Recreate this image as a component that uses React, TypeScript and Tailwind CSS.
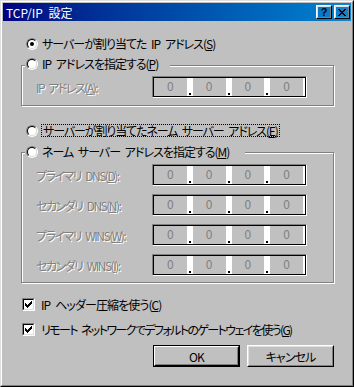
import { Fragment } from 'react';

const disabledText = 'text-[#808080] [text-shadow:1px_1px_0_#fff]';

function Radio({ checked }: { checked?: boolean }) {
  return (
    <span className="flex h-[12px] w-[12px] shrink-0 rounded-full border border-t-[#808080] border-l-[#808080] border-b-white border-r-white">
      <span className="flex flex-1 items-center justify-center rounded-full border border-t-black border-l-black border-b-[#dfdfdf] border-r-[#dfdfdf] bg-white">
        {checked && <span className="h-[4px] w-[4px] rounded-full bg-black" />}
      </span>
    </span>
  );
}

function Checkbox() {
  return (
    <span className="flex h-[13px] w-[13px] shrink-0 border border-t-[#808080] border-l-[#808080] border-b-white border-r-white">
      <span className="flex flex-1 items-center justify-center border border-t-black border-l-black border-b-[#dfdfdf] border-r-[#dfdfdf] bg-white">
        <svg width="7" height="7" viewBox="0 0 7 7" shapeRendering="crispEdges">
          <path
            d="M6 0h1v1h-1zM5 1h2v1h-2zM0 2h1v1h-1zM4 2h3v1h-3zM0 3h2v1h-2zM3 3h3v1h-3zM0 4h5v1h-5zM1 5h3v1h-3zM2 6h1v1h-1z"
            fill="#000"
          />
        </svg>
      </span>
    </span>
  );
}

function IpBox() {
  return (
    <div className="flex h-[22px] w-[155px] shrink-0 border border-t-[#808080] border-l-[#808080] border-b-white border-r-white">
      <div className="flex flex-1 border border-black bg-white pr-[2px]">
        {[0, 1, 2, 3].map((i) => (
          <Fragment key={i}>
            {i > 0 && (
              <div className="flex w-[6px] items-end justify-center pb-[1px]">
                <span className="h-[2px] w-[2px] bg-black" />
              </div>
            )}
            <div className="flex-1 bg-[#c0c0c0] pt-[2px] text-center leading-[12px] tracking-normal text-[#808080]">0</div>
          </Fragment>
        ))}
      </div>
    </div>
  );
}

function IpRow({ label, mnemonic, first }: { label: string; mnemonic: string; first?: boolean }) {
  return (
    <div className={`${first ? 'mt-[5px]' : 'mt-[8px]'} flex items-center pl-[14px]`}>
      <span className={`w-[116px] whitespace-pre tracking-[-1.5px] ${disabledText}`}>
        {label}(<u>{mnemonic}</u>):
      </span>
      <IpBox />
    </div>
  );
}

function Button({ label, isDefault }: { label: string; isDefault?: boolean }) {
  if (isDefault) {
    return (
      <div className="flex h-[22px] w-[87px] border border-black">
        <div className="flex flex-1 border border-t-white border-l-white border-b-black border-r-black">
          <div className="flex flex-1 items-center justify-center border border-t-[#c0c0c0] border-l-[#c0c0c0] border-b-[#808080] border-r-[#808080]">
            {label}
          </div>
        </div>
      </div>
    );
  }
  return (
    <div className="flex h-[22px] w-[87px] border border-t-white border-l-white border-b-black border-r-black">
      <div className="flex flex-1 items-center justify-center border border-t-[#dfdfdf] border-l-[#dfdfdf] border-b-[#808080] border-r-[#808080]">
        {label}
      </div>
    </div>
  );
}

export default function App() {
  return (
    <div className="h-[387px] w-[354px] border border-t-[#dfdfdf] border-l-[#dfdfdf] border-b-black border-r-black bg-[#c0c0c0] font-['Noto_Sans_CJK_JP',sans-serif] text-[12px] leading-[15px] tracking-[-0.9px] text-black [font-feature-settings:'palt'] [word-spacing:3px]">
      <div className="flex h-full flex-col border border-t-white border-l-white border-b-[#808080] border-r-[#808080] p-[1px]">
        {/* Title bar */}
        <div className="flex h-[18px] items-center bg-gradient-to-r from-[#000080] to-[#1084d0] pl-[3px] pr-[1px]">
          <span className="tracking-normal text-white">TCP/IP 設定</span>
          <div className="ml-auto flex gap-[2px]">
            <div className="flex h-[14px] w-[16px] border border-t-white border-l-white border-b-black border-r-black">
              <div className="flex flex-1 items-center justify-center border border-t-[#dfdfdf] border-l-[#dfdfdf] border-b-[#808080] border-r-[#808080] font-['Liberation_Sans',sans-serif] text-[11px] font-bold leading-none tracking-normal">
                ?
              </div>
            </div>
            <div className="flex h-[14px] w-[16px] border border-t-white border-l-white border-b-black border-r-black">
              <div className="flex flex-1 items-center justify-center border border-t-[#dfdfdf] border-l-[#dfdfdf] border-b-[#808080] border-r-[#808080]">
                <svg width="8" height="7" viewBox="0 0 8 7" shapeRendering="crispEdges">
                  <path
                    d="M0 0h2v1h-2zM6 0h2v1h-2zM1 1h2v1h-2zM5 1h2v1h-2zM2 2h4v1h-4zM3 3h2v1h-2zM2 4h4v1h-4zM1 5h2v1h-2zM5 5h2v1h-2zM0 6h2v1h-2zM6 6h2v1h-2z"
                    fill="#000"
                  />
                </svg>
              </div>
            </div>
          </div>
        </div>

        {/* Content */}
        <div className="flex w-[331px] flex-col pl-[18px]">
          <div className="ml-[5px] mt-[15px] flex h-[15px] items-center gap-[4px]">
            <Radio checked />
            <span className="whitespace-pre tracking-[-1px]">
              サーバーが割り当てた IP アドレス(<u>S</u>)
            </span>
          </div>

          <div className="mt-[14px] flex flex-col border border-[#808080] pb-[7px] shadow-[inset_1px_1px_0_#fff,1px_1px_0_#fff]">
            <div className="-mt-[10px] ml-[3px] flex h-[15px] w-[145px] items-center gap-[4px] bg-[#c0c0c0] pl-[1px]">
              <Radio />
              <span className="whitespace-pre tracking-[-1px]">
                IP アドレスを指定する(<u>P</u>)
              </span>
            </div>
            <IpRow label="IP アドレス" mnemonic="A" first />
          </div>

          <div className="ml-[5px] mt-[17px] flex h-[15px] items-center gap-[3px]">
            <Radio />
            <span className="whitespace-pre border border-dotted border-black px-[1px] leading-[11px] tracking-[-1.1px]">
              サーバーが割り当てたネーム サーバー アドレス(<u>E</u>)
            </span>
          </div>

          <div className="mt-[14px] flex flex-col border border-[#808080] pb-[6px] shadow-[inset_1px_1px_0_#fff,1px_1px_0_#fff]">
            <div className="-mt-[9px] ml-[3px] flex h-[15px] w-[220px] items-center gap-[4px] bg-[#c0c0c0] pl-[1px]">
              <Radio />
              <span className="whitespace-pre tracking-[-1px]">
                ネーム サーバー アドレスを指定する(<u>M</u>)
              </span>
            </div>
            <IpRow label="プライマリ DNS" mnemonic="D" first />
            <IpRow label="セカンダリ DNS" mnemonic="N" />
            <IpRow label="プライマリ WINS" mnemonic="W" />
            <IpRow label="セカンダリ WINS" mnemonic="I" />
          </div>

          <div className="ml-[1px] mt-[14px] flex h-[15px] items-center gap-[6px]">
            <Checkbox />
            <span className="whitespace-pre">
              IP ヘッダー圧縮を使う(<u>C</u>)
            </span>
          </div>
          <div className="ml-[1px] mt-[10px] flex h-[15px] items-center gap-[6px]">
            <Checkbox />
            <span className="whitespace-pre tracking-[-1.6px]">
              リモート ネットワークでデフォルトのゲートウェイを使う(<u>G</u>)
            </span>
          </div>

          <div className="mt-[8px] flex justify-end gap-[7px]">
            <Button label="OK" isDefault />
            <Button label="キャンセル" />
          </div>
        </div>
      </div>
    </div>
  );
}
